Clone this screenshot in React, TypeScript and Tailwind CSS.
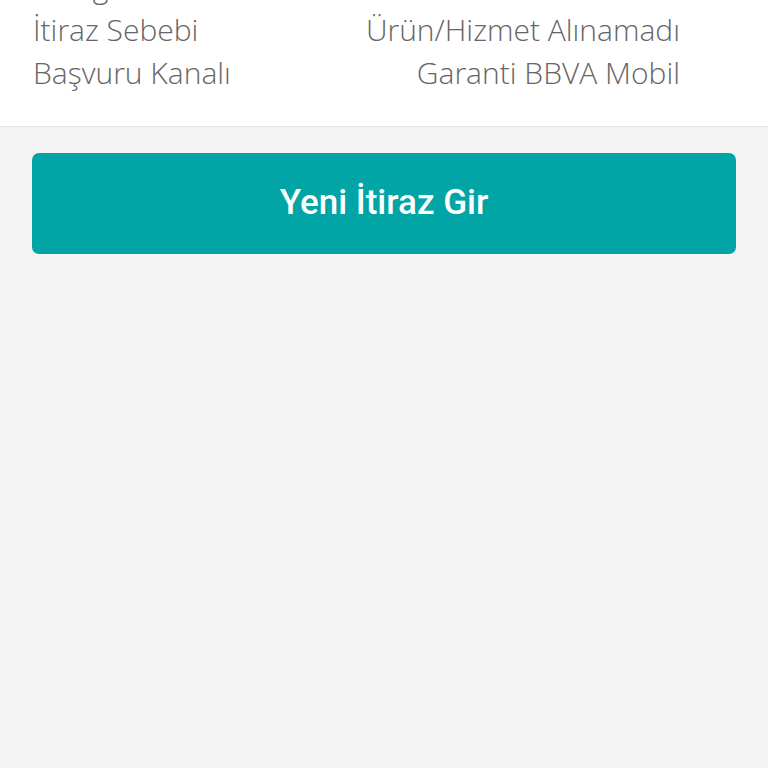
const rows = [
  { label: 'Kategori', value: 'Harcama' },
  { label: 'İtiraz Sebebi', value: 'Ürün/Hizmet Alınamadı' },
  { label: 'Başvuru Kanalı', value: 'Garanti BBVA Mobil' },
]

export default function App() {
  return (
    <div className="flex min-h-[768px] flex-col bg-[#f3f3f3] font-['Open_Sans',sans-serif]">
      {/* detay kartı */}
      <div className="flex flex-col border-b border-[#e4e4e4] bg-white px-[33px] pb-[32px]">
        <div className="-mt-[35px] flex flex-col">
          {rows.map((r) => (
            <div key={r.label} className="flex h-[43px] items-center justify-between pr-[55px] text-[30px] font-light text-[#666666]">
              <span>{r.label}</span>
              <span>{r.value}</span>
            </div>
          ))}
        </div>
      </div>

      <div className="px-[32px] pt-[26px]">
        <button className="flex h-[101px] w-full items-center justify-center rounded-[7px] bg-[#02a5a5] font-['Roboto',sans-serif] text-[35px] font-medium text-white">
          Yeni İtiraz Gir
        </button>
      </div>
    </div>
  )
}
